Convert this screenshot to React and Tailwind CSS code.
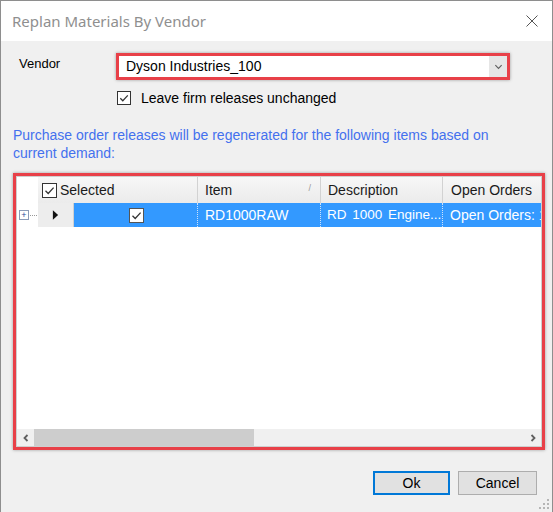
import React from 'react'

const ui = { fontFamily: '"Liberation Sans", Arial, sans-serif' }

function Check({ className }) {
  return (
    <svg viewBox="0 0 13 13" className={className}>
      <path d="M2.5 6.8 L5.2 9.5 L10.6 3.6" fill="none" stroke="#333" strokeWidth="1.3" />
    </svg>
  )
}

function Chevron({ dir }) {
  return (
    <svg viewBox="0 0 10 10" className="h-[10px] w-[10px]">
      <path
        d={dir === 'left' ? 'M6.5 2 L3.5 5 L6.5 8' : 'M3.5 2 L6.5 5 L3.5 8'}
        fill="none"
        stroke="#606060"
        strokeWidth="1.8"
      />
    </svg>
  )
}

function HeaderCell({ children, className = '' }) {
  return (
    <div
      className={
        'relative flex h-full items-center border-r border-[#d2d2d2] bg-gradient-to-b from-[#f7f7f7] to-[#ebebeb] text-[14px] text-[#1a1a1a] ' +
        className
      }
    >
      {children}
    </div>
  )
}

export default function App() {
  return (
    <div
      className="flex h-[512px] w-[553px] flex-col overflow-hidden border-l border-r border-t border-[#8e8e8e] bg-[#f0f0f0]"
      style={ui}
    >
      {/* ===== TITLE BAR ===== */}
      <div className="flex h-[40px] shrink-0 items-center justify-between bg-white pl-[11px] pr-[14px]">
        <span
          className="text-[15px] text-[#8f8f8f]"
          style={{ fontFamily: '"Segoe UI", "Noto Sans", sans-serif' }}
        >
          Replan Materials By Vendor
        </span>
        <svg viewBox="0 0 12 12" className="h-[12px] w-[12px]">
          <path d="M0.5 0.5 L11.5 11.5 M11.5 0.5 L0.5 11.5" stroke="#555" strokeWidth="1" />
        </svg>
      </div>

      {/* ===== VENDOR ===== */}
      <div className="mt-[12px] flex h-[27px] items-start">
        <div className="w-[115px] pl-[18px] pt-[1px] text-[13px] text-black">Vendor</div>
        <div className="flex h-[27px] w-[394px] border-[3px] border-[#e84048] bg-white shadow-[0_0_3px_rgba(0,0,0,0.35)]">
          <div className="flex flex-1 items-center pl-[7px] text-[14px] text-black">Dyson Industries_100</div>
          <div className="flex w-[18px] items-center justify-center bg-[#e6e6e6]">
            <svg viewBox="0 0 10 10" className="h-[9px] w-[9px]">
              <path d="M1.5 3.5 L5 7 L8.5 3.5" fill="none" stroke="#606060" strokeWidth="1.3" />
            </svg>
          </div>
        </div>
      </div>

      {/* ===== FIRM RELEASES ===== */}
      <div className="mt-[10px] flex h-[16px] items-center pl-[116px]">
        <div className="h-[14px] w-[14px] border border-[#333] bg-white">
          <Check className="h-[12px] w-[12px]" />
        </div>
        <span className="ml-[10px] text-[14px] text-black">Leave firm releases unchanged</span>
      </div>

      {/* ===== INFO ===== */}
      <p className="mt-[20px] pl-[12px] text-[14px] leading-[18px] text-[#4470ee]">
        Purchase order releases will be regenerated for the following items based on
        <br />
        current demand:
      </p>

      {/* ===== GRID ===== */}
      <div className="ml-[12px] mt-[11px] flex h-[277px] w-[532px] flex-col border-[3px] border-[#e84048] bg-white shadow-[0_0_3px_rgba(0,0,0,0.35)]">
        <div className="flex flex-1 flex-col overflow-hidden border border-[#cfcfcf]">
          {/* header */}
          <div className="flex h-[26px] shrink-0">
            <div className="w-[21px] shrink-0 bg-white" />
            <HeaderCell className="w-[160px] shrink-0 pl-[4px]">
              <div className="mr-[3px] h-[15px] w-[15px] border border-[#333] bg-white">
                <Check className="h-[13px] w-[13px]" />
              </div>
              Selected
            </HeaderCell>
            <HeaderCell className="w-[123px] shrink-0 pl-[7px]">
              Item
              <span className="absolute right-[9px] top-[5px] text-[9px] text-[#999]">/</span>
            </HeaderCell>
            <HeaderCell className="w-[122px] shrink-0 pl-[7px]">Description</HeaderCell>
            <HeaderCell className="flex-1 whitespace-nowrap border-r-0 pl-[8px]">Open Orders</HeaderCell>
          </div>

          {/* row */}
          <div className="flex h-[24px] shrink-0">
            <div className="flex w-[21px] shrink-0 items-center bg-white pl-[2px]">
              <div className="flex h-[10px] w-[10px] items-center justify-center border border-[#8a9bb8] bg-white text-[9px] leading-none text-[#2b4c9a]">
                +
              </div>
              <div className="ml-[1px] w-[7px] border-t border-dotted border-[#999]" />
            </div>
            <div className="flex w-[36px] shrink-0 items-center justify-center border-r border-[#d0d0d0] bg-[#ededed]">
              <svg viewBox="0 0 8 12" className="h-[12px] w-[7px]">
                <path d="M1 0.5 L7 6 L1 11.5 Z" fill="#111" />
              </svg>
            </div>
            <div className="flex flex-1 bg-[#3399ff] text-[14px] text-white">
              <div className="flex w-[124px] shrink-0 items-center justify-center border-r border-dotted border-[#cfe3fb]">
                <div className="ml-[1px] h-[15px] w-[15px] border border-[#555] bg-white">
                  <Check className="h-[13px] w-[13px]" />
                </div>
              </div>
              <div className="flex w-[123px] shrink-0 items-center border-r border-dotted border-[#cfe3fb] pl-[7px]">
                RD1000RAW
              </div>
              <div className="flex w-[122px] shrink-0 items-center whitespace-nowrap border-r border-dotted border-[#cfe3fb] pl-[6px] text-[13.5px] [word-spacing:2px]">
                RD 1000 Engine...
              </div>
              <div className="flex min-w-0 flex-1 items-center overflow-hidden whitespace-nowrap pl-[7px]">
                Open Orders: 1
              </div>
            </div>
          </div>

          <div className="flex-1 bg-white" />

          {/* scrollbar */}
          <div className="flex h-[17px] shrink-0 bg-[#f0f0f0]">
            <div className="flex w-[17px] items-center justify-center">
              <Chevron dir="left" />
            </div>
            <div className="flex-1">
              <div className="h-full w-[220px] bg-[#cdcdcd]" />
            </div>
            <div className="flex w-[17px] items-center justify-center">
              <Chevron dir="right" />
            </div>
          </div>
        </div>
      </div>

      {/* ===== BUTTONS ===== */}
      <div className="mt-[21px] flex justify-end gap-[8px] pr-[15px]">
        <button className="h-[24px] w-[77px] border-2 border-[#0078d7] bg-[#e1e1e1] text-[14px] text-black">
          Ok
        </button>
        <button className="h-[24px] w-[79px] border border-[#adadad] bg-[#e1e1e1] text-[14px] text-black">
          Cancel
        </button>
      </div>

      {/* resize grip */}
      <div className="mt-auto flex justify-end pb-[2px] pr-[2px]">
        <svg viewBox="0 0 12 12" className="h-[12px] w-[12px]">
          {[
            [9, 1], [9, 5], [5, 5], [9, 9], [5, 9], [1, 9],
          ].map(([x, y]) => (
            <rect key={x + '-' + y} x={x} y={y} width="2" height="2" fill="#b5b5b5" />
          ))}
        </svg>
      </div>
    </div>
  )
}
